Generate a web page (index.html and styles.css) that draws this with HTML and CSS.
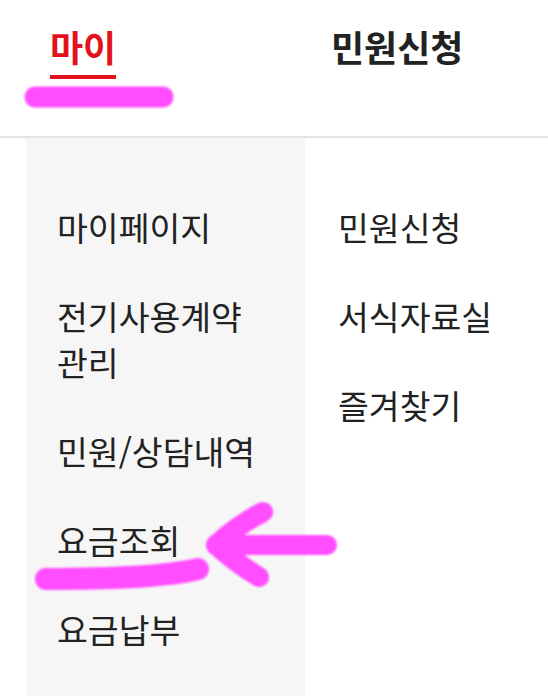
FILE: index.html
```html
<!DOCTYPE html>
<html lang="ko">
<head>
<meta charset="utf-8">
<title>마이 메뉴</title>
<link rel="stylesheet" href="styles.css">
</head>
<body>
<div class="page">
  <header class="tabs">
    <div class="tab tab-active"><span class="tab-label">마이</span></div>
    <div class="tab"><span class="tab-label">민원신청</span></div>
  </header>
  <main class="menu">
    <ul class="col col-left">
      <li class="item">마이페이지</li>
      <li class="item">전기사용계약 관리</li>
      <li class="item">민원/상담내역</li>
      <li class="item">요금조회</li>
      <li class="item">요금납부</li>
    </ul>
    <ul class="col col-right">
      <li class="item">민원신청</li>
      <li class="item">서식자료실</li>
      <li class="item">즐겨찾기</li>
    </ul>
  </main>
  <svg class="marks" width="548" height="696" viewBox="0 0 548 696" aria-hidden="true">
    <defs>
      <filter id="soft" x="-10%" y="-10%" width="120%" height="120%">
        <feGaussianBlur stdDeviation="1.2"/>
      </filter>
    </defs>
    <g fill="none" stroke="#ff4dff" stroke-linecap="round" stroke-linejoin="round" filter="url(#soft)">
      <path d="M35 97 L163 97" stroke-width="21"/>
      <path d="M46 579 C 100 579 160 578 198 569" stroke-width="22"/>
      <path d="M327 545 L216 545" stroke-width="20"/>
      <path d="M263 512 Q 236 526 216 545 Q 236 563 259 577" stroke-width="20"/>
    </g>
  </svg>
</div>
</body>
</html>
```

FILE: styles.css
```css
* {
  box-sizing: border-box;
}

html, body {
  margin: 0;
  padding: 0;
  background: #ffffff;
}

body {
  font-family: "Noto Sans CJK KR", "Noto Sans", sans-serif;
  color: #222222;
}

.page {
  position: relative;
  width: 548px;
  min-height: 696px;
  display: flex;
  flex-direction: column;
  overflow: hidden;
}

.tabs {
  display: grid;
  grid-template-columns: 281px 1fr;
  height: 138px;
  border-bottom: 2px solid #e3e3e3;
}

.tab {
  padding-top: 26px;
  padding-left: 50px;
}

.tab-label {
  display: inline-block;
  font-size: 36px;
  font-weight: 700;
  line-height: 40px;
  color: #222222;
}

.tab-active .tab-label {
  color: #e3131e;
  padding-bottom: 9px;
  border-bottom: 4px solid #e3131e;
}

.menu {
  flex: 1;
  display: grid;
  grid-template-columns: 305px 1fr;
}

.col {
  list-style: none;
  margin: 0;
  padding: 45px 0 0 0;
}

.col-left {
  margin-left: 26px;
  padding-left: 31px;
  padding-right: 20px;
  background: #f6f6f6;
  width: 279px;
}

.col-right {
  padding-left: 33px;
}

.item {
  font-size: 33.5px;
  line-height: 46px;
  padding: 21px 0 22px;
  word-break: keep-all;
  color: #222222;
}

.marks {
  position: absolute;
  left: 0;
  top: 0;
  pointer-events: none;
}
```
